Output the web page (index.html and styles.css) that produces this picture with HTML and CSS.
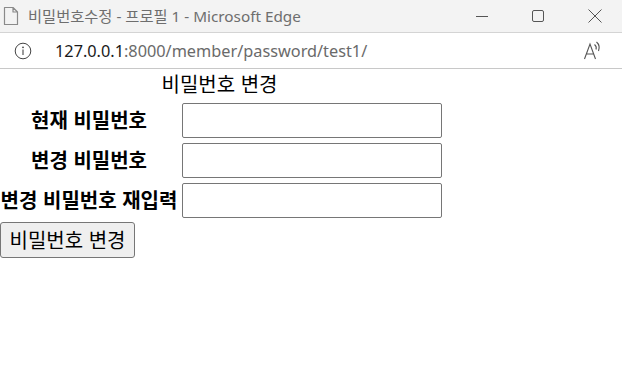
FILE: index.html
```html
<!DOCTYPE html>
<html lang="ko">

<head>
    <meta charset="UTF-8">
    <title>비밀번호수정</title>
    <link rel="stylesheet" href="styles.css">
</head>

<body>
    <div class="titlebar">
        <svg class="doc-icon" width="16" height="20" viewBox="0 0 16 20">
            <path d="M1.5 1.5 H10 L14.5 6 V18.5 H1.5 Z M10 1.5 V6 H14.5" fill="none" stroke="#8a8a8a" stroke-width="1.2" stroke-linejoin="round"/>
        </svg>
        <span class="window-title">비밀번호수정 - 프로필 1 - Microsoft Edge</span>
        <div class="window-controls">
            <svg width="14" height="14" viewBox="0 0 14 14"><path d="M1 7.5 H13" stroke="#555" stroke-width="1"/></svg>
            <svg width="14" height="14" viewBox="0 0 14 14"><rect x="1.5" y="1.5" width="11" height="11" rx="1.5" fill="none" stroke="#555" stroke-width="1"/></svg>
            <svg width="16" height="16" viewBox="0 0 16 16"><path d="M1.5 1.5 L14.5 14.5 M14.5 1.5 L1.5 14.5" stroke="#555" stroke-width="1"/></svg>
        </div>
    </div>

    <div class="addressbar">
        <svg class="info-icon" width="18" height="18" viewBox="0 0 18 18">
            <circle cx="9" cy="9" r="7.8" fill="none" stroke="#444" stroke-width="1"/>
            <circle cx="9" cy="5.3" r="0.9" fill="#444"/>
            <path d="M9 7.5 V13" stroke="#444" stroke-width="1.1"/>
        </svg>
        <span class="url"><span class="host">127.0.0.1</span>:8000/member/password/test1/</span>
        <svg class="read-icon" width="22" height="20" viewBox="0 0 22 20">
            <path d="M1.5 18 L7 3 L12.5 18 M3.4 13 H10.6" fill="none" stroke="#555" stroke-width="1.1"/>
            <path d="M11.5 3.5 Q14 5.5 13 8.5" fill="none" stroke="#555" stroke-width="1.1"/>
            <path d="M13.5 1 Q17.5 4.5 15.5 10" fill="none" stroke="#555" stroke-width="1.1"/>
        </svg>
    </div>

    <div class="page">
        <form id="passwordForm">
            <table class="pw-table">
                <caption>비밀번호 변경</caption>
                <tr>
                    <th>현재 비밀번호</th>
                    <td><input type="password" name="current_password"></td>
                </tr>
                <tr>
                    <th>변경 비밀번호</th>
                    <td><input type="password" name="new_password"></td>
                </tr>
                <tr>
                    <th>변경 비밀번호 재입력</th>
                    <td><input type="password" name="new_password_check"></td>
                </tr>
            </table>
            <button type="submit" class="submit-btn">비밀번호 변경</button>
        </form>
    </div>
</body>

</html>
```

FILE: styles.css
```css
html,
body {
    margin: 0;
    padding: 0;
    background: #ffffff;
}

body {
    font-family: "Noto Sans CJK KR", "Noto Sans", sans-serif;
    width: 622px;
    height: 386px;
    overflow: hidden;
}

/* window chrome */
.titlebar {
    height: 32px;
    background: #f3f3f3;
    border-bottom: 1px solid #d4d4d4;
    display: flex;
    align-items: center;
    padding-left: 3px;
}

.doc-icon {
    margin-right: 9px;
    flex-shrink: 0;
}

.window-title {
    font-family: "Noto Sans", "Noto Sans CJK KR", sans-serif;
    font-size: 15.3px;
    color: #6e6e6e;
    line-height: 20px;
    white-space: nowrap;
}

.window-controls {
    margin-left: auto;
    display: flex;
    align-items: center;
    gap: 42px;
    padding-right: 19px;
}

.addressbar {
    height: 35px;
    border-bottom: 1px solid #c8c8c8;
    display: flex;
    align-items: center;
    padding-left: 14px;
}

.info-icon {
    margin-right: 23px;
    flex-shrink: 0;
}

.url {
    font-family: "Noto Sans", sans-serif;
    font-size: 16.3px;
    color: #6a6a6a;
    line-height: 20px;
    white-space: nowrap;
}

.url .host {
    color: #1a1a1a;
}

.read-icon {
    margin-left: auto;
    margin-right: 17px;
}

/* page content */
.page {
    font-size: 20px;
    color: #000;
}

.pw-table {
    border-collapse: collapse;
}

.pw-table caption {
    height: 31px;
    line-height: 30px;
    text-align: center;
    padding-right: 5px;
}

.pw-table th {
    width: 178px;
    height: 40px;
    padding: 0;
    font-weight: bold;
    text-align: center;
    white-space: nowrap;
    line-height: 20px;
}

.pw-table td {
    padding: 0 2px 0 4px;
    height: 40px;
}

.pw-table input {
    display: block;
    width: 260px;
    height: 35px;
    box-sizing: border-box;
    border: 1px solid #767676;
    border-radius: 2px;
    margin: 0;
}

.submit-btn {
    display: block;
    margin-top: 2px;
    width: 135px;
    height: 36px;
    padding: 0;
    font-family: inherit;
    font-size: 20px;
    line-height: 24px;
    color: #000;
    background: #efefef;
    border: 1px solid #767676;
    border-radius: 3px;
    cursor: pointer;
}
```
